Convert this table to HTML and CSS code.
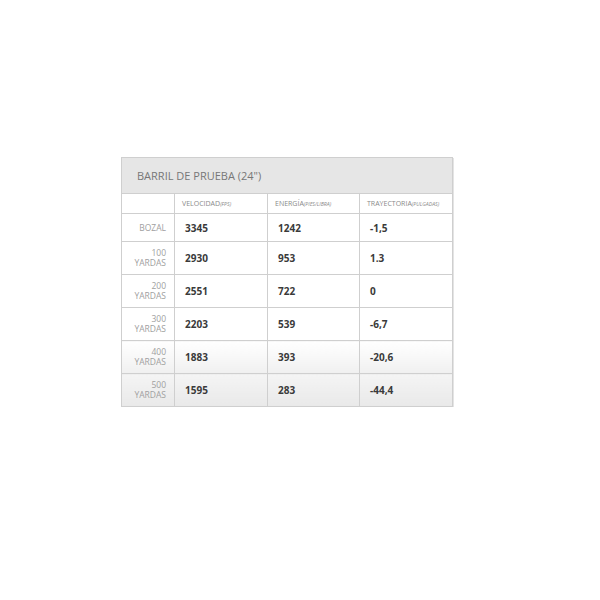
FILE: index.html
```html
<!DOCTYPE html>
<html>
<head>
<meta charset="utf-8">
<link rel="stylesheet" href="styles.css">
</head>
<body>
<div class="wrap">
  <table class="ballistics">
    <colgroup>
      <col class="c1"><col class="c2"><col class="c3"><col class="c4">
    </colgroup>
    <thead>
      <tr class="title-row"><th colspan="4" class="title">BARRIL DE PRUEBA (24")</th></tr>
      <tr class="head-row">
        <th class="lab"></th>
        <th>VELOCIDAD<i>(FPS)</i></th>
        <th>ENERGÍA<i>(PIES/LIBRA)</i></th>
        <th>TRAYECTORIA<i>(PULGADAS)</i></th>
      </tr>
    </thead>
    <tbody>
      <tr class="r0"><td class="lab">BOZAL</td><td>3345</td><td>1242</td><td>-1,5</td></tr>
      <tr><td class="lab">100<br>YARDAS</td><td>2930</td><td>953</td><td>1.3</td></tr>
      <tr><td class="lab">200<br>YARDAS</td><td>2551</td><td>722</td><td>0</td></tr>
      <tr><td class="lab">300<br>YARDAS</td><td>2203</td><td>539</td><td>-6,7</td></tr>
      <tr class="g1"><td class="lab">400<br>YARDAS</td><td>1883</td><td>393</td><td>-20,6</td></tr>
      <tr class="g2"><td class="lab">500<br>YARDAS</td><td>1595</td><td>283</td><td>-44,4</td></tr>
    </tbody>
  </table>
</div>
</body>
</html>
```
FILE: styles.css
```css
html, body { margin: 0; padding: 0; background: #fff; }
.wrap { padding: 157px 0 0 121px; }
.ballistics {
  border-collapse: collapse;
  table-layout: fixed;
  width: 331px;
  font-family: "Open Sans", "Liberation Sans", sans-serif;
  box-shadow: 1px 1px 0 #e4e4e4;
}
.c1 { width: 53px; }
.c2 { width: 93px; }
.c3 { width: 92px; }
.c4 { width: 93px; }
.ballistics th, .ballistics td {
  border: 1px solid #cfcfcf;
  padding: 0;
  text-align: left;
  vertical-align: middle;
}
.title-row th {
  height: 35px;
  background: #e6e6e6;
  font-size: 11px;
  font-weight: 400;
  color: #777;
  padding-left: 15px;
}
.head-row th {
  height: 19px;
  font-size: 7px;
  font-weight: 400;
  color: #8a8a8a;
  padding-left: 7px;
}
.head-row i { font-size: 5.2px; font-style: italic; }
.ballistics td {
  height: 32px;
  font-size: 10px;
  font-weight: 700;
  color: #3a3a3a;
  padding-left: 10px;
}
.ballistics tr.r0 td { height: 27px; }
.ballistics td.lab {
  text-align: right;
  padding: 0 8px 0 0;
  font-size: 8.5px;
  font-weight: 400;
  color: #a0a0a0;
  line-height: 10px;
}
.g1 td { background: linear-gradient(#ffffff, #f0f0f0); }
.g2 td { background: linear-gradient(#f4f4f4, #e9e9e9); }
```
